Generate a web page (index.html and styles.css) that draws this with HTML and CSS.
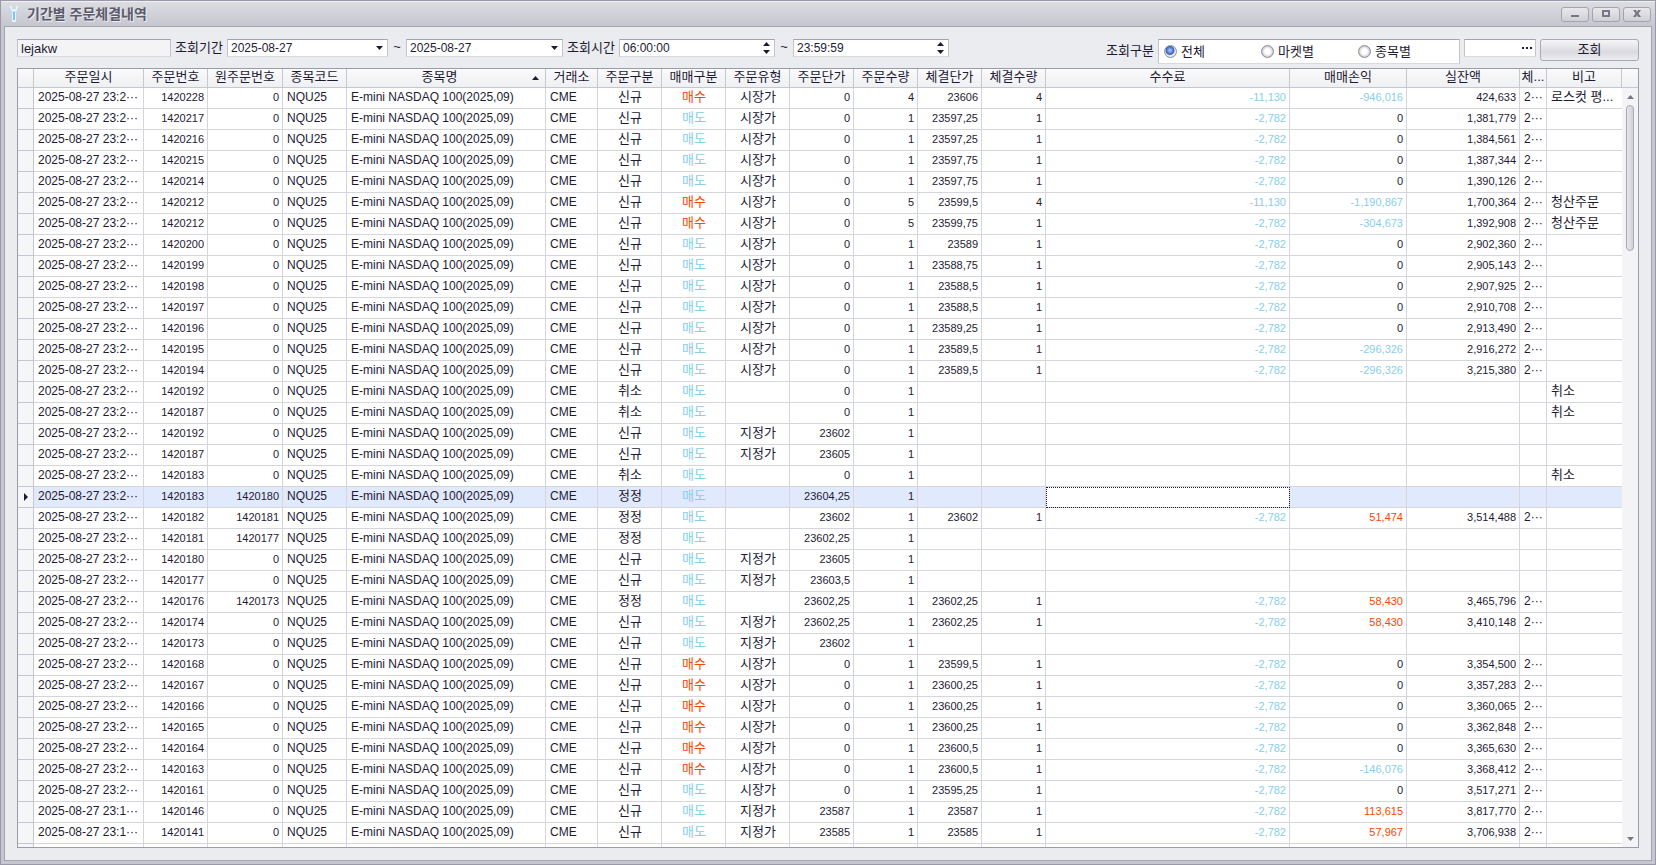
FILE: index.html
```
<!DOCTYPE html>
<html lang="ko">
<head>
<meta charset="utf-8">
<title>기간별 주문체결내역</title>
<link rel="stylesheet" href="styles.css">
</head>
<body>
<div class="window">
  <header class="titlebar">
    <svg class="appicon" width="10" height="16" viewBox="0 0 10 16">
      <path d="M1 0h2v3h4V0h2v4L7 6v10H3V6L1 4z" fill="#e4f4fd"/>
      <path d="M1 2v2l2 2h4l2-2V2" fill="none" stroke="#a9dcf6"/>
      <path d="M4 6h2v8H4z" fill="#7cc4f4"/>
    </svg>
    <h1>기간별 주문체결내역</h1>
    <div class="winbtns">
      <button type="button" aria-label="최소화"><svg width="10" height="8"><path d="M1 5h8v2H1z"/></svg></button>
      <button type="button" aria-label="최대화"><svg width="10" height="8"><path fill-rule="evenodd" d="M1 0h8v7H1zM3 2v3h4V2z"/></svg></button>
      <button type="button" aria-label="닫기"><svg width="10" height="8"><path d="M1 0h3l1 2 1-2h3L6.500 3.500 9 7H6L5 5 4 7H1l2.500-3.500z"/></svg></button>
    </div>
  </header>
  <main>
    <form class="toolbar">
      <input class="user" type="text" value="lejakw" aria-label="계좌" readonly>
      <label class="caption" for="date1">조회기간</label>
      <span class="box date1"><input id="date1" type="text" value="2025-08-27"><button type="button" class="drop" aria-label="달력"><svg width="7" height="4"><path d="M0 0h7L3.500 4z"/></svg></button></span>
      <span class="tilde">~</span>
      <span class="box date2"><input type="text" value="2025-08-27" aria-label="종료일"><button type="button" class="drop" aria-label="달력"><svg width="7" height="4"><path d="M0 0h7L3.500 4z"/></svg></button></span>
      <label class="caption" for="time1">조회시간</label>
      <span class="box time"><input id="time1" type="text" value="06:00:00"><button type="button" class="drop" aria-label="시간 변경"><svg width="7" height="12"><path d="M0 4h7L3.500 0zM0 8h7L3.500 12z"/></svg></button></span>
      <span class="tilde">~</span>
      <span class="box time"><input type="text" value="23:59:59" aria-label="종료시간"><button type="button" class="drop" aria-label="시간 변경"><svg width="7" height="12"><path d="M0 4h7L3.500 0zM0 8h7L3.500 12z"/></svg></button></span>
      <div class="filter">
        <span class="caption kind">조회구분</span>
        <div class="radios">
          <label><input type="radio" name="kind" checked>전체</label>
          <label><input type="radio" name="kind">마켓별</label>
          <label><input type="radio" name="kind">종목별</label>
        </div>
        <span class="box code"><input type="text" aria-label="종목"><button type="button" class="drop" aria-label="종목 찾기"><svg width="10" height="2"><path d="M0 0h2v2H0zM4 0h2v2H4zM8 0h2v2H8z"/></svg></button></span>
        <button type="submit" class="search">조회</button>
      </div>
    </form>
    <div class="grid">
      <div class="rows">
      <table>
        <colgroup>
          <col class="c16"><col class="c110"><col class="c64"><col class="c75"><col class="c64"><col class="c199"><col class="c52">
          <col class="c64"><col class="c64"><col class="c64"><col class="c64"><col class="c64"><col class="c64"><col class="c64">
          <col><col class="c117"><col class="c113"><col class="c27"><col class="c75">
        </colgroup>
        <thead>
          <tr><th></th><th>주문일시</th><th>주문번호</th><th>원주문번호</th><th>종목코드</th><th class="sorted">종목명<svg width="7" height="4"><path d="M0 4h7L3.500 0z"/></svg></th><th>거래소</th><th>주문구분</th><th>매매구분</th><th>주문유형</th><th>주문단가</th><th>주문수량</th><th>체결단가</th><th>체결수량</th><th>수수료</th><th>매매손익</th><th>실잔액</th><th>체...</th><th>비고</th></tr>
        </thead>
        <tbody>
          <tr><td></td><td>2025-08-27 23:2···</td><td>1420228</td><td>0</td><td>NQU25</td><td>E-mini NASDAQ 100(2025,09)</td><td>CME</td><td>신규</td><td class="up">매수</td><td>시장가</td><td>0</td><td>4</td><td>23606</td><td>4</td><td class="down">-11,130</td><td class="down">-946,016</td><td>424,633</td><td>2···</td><td>로스컷 평...</td></tr>
          <tr><td></td><td>2025-08-27 23:2···</td><td>1420217</td><td>0</td><td>NQU25</td><td>E-mini NASDAQ 100(2025,09)</td><td>CME</td><td>신규</td><td class="down">매도</td><td>시장가</td><td>0</td><td>1</td><td>23597,25</td><td>1</td><td class="down">-2,782</td><td>0</td><td>1,381,779</td><td>2···</td><td></td></tr>
          <tr><td></td><td>2025-08-27 23:2···</td><td>1420216</td><td>0</td><td>NQU25</td><td>E-mini NASDAQ 100(2025,09)</td><td>CME</td><td>신규</td><td class="down">매도</td><td>시장가</td><td>0</td><td>1</td><td>23597,25</td><td>1</td><td class="down">-2,782</td><td>0</td><td>1,384,561</td><td>2···</td><td></td></tr>
          <tr><td></td><td>2025-08-27 23:2···</td><td>1420215</td><td>0</td><td>NQU25</td><td>E-mini NASDAQ 100(2025,09)</td><td>CME</td><td>신규</td><td class="down">매도</td><td>시장가</td><td>0</td><td>1</td><td>23597,75</td><td>1</td><td class="down">-2,782</td><td>0</td><td>1,387,344</td><td>2···</td><td></td></tr>
          <tr><td></td><td>2025-08-27 23:2···</td><td>1420214</td><td>0</td><td>NQU25</td><td>E-mini NASDAQ 100(2025,09)</td><td>CME</td><td>신규</td><td class="down">매도</td><td>시장가</td><td>0</td><td>1</td><td>23597,75</td><td>1</td><td class="down">-2,782</td><td>0</td><td>1,390,126</td><td>2···</td><td></td></tr>
          <tr><td></td><td>2025-08-27 23:2···</td><td>1420212</td><td>0</td><td>NQU25</td><td>E-mini NASDAQ 100(2025,09)</td><td>CME</td><td>신규</td><td class="up">매수</td><td>시장가</td><td>0</td><td>5</td><td>23599,5</td><td>4</td><td class="down">-11,130</td><td class="down">-1,190,867</td><td>1,700,364</td><td>2···</td><td>청산주문</td></tr>
          <tr><td></td><td>2025-08-27 23:2···</td><td>1420212</td><td>0</td><td>NQU25</td><td>E-mini NASDAQ 100(2025,09)</td><td>CME</td><td>신규</td><td class="up">매수</td><td>시장가</td><td>0</td><td>5</td><td>23599,75</td><td>1</td><td class="down">-2,782</td><td class="down">-304,673</td><td>1,392,908</td><td>2···</td><td>청산주문</td></tr>
          <tr><td></td><td>2025-08-27 23:2···</td><td>1420200</td><td>0</td><td>NQU25</td><td>E-mini NASDAQ 100(2025,09)</td><td>CME</td><td>신규</td><td class="down">매도</td><td>시장가</td><td>0</td><td>1</td><td>23589</td><td>1</td><td class="down">-2,782</td><td>0</td><td>2,902,360</td><td>2···</td><td></td></tr>
          <tr><td></td><td>2025-08-27 23:2···</td><td>1420199</td><td>0</td><td>NQU25</td><td>E-mini NASDAQ 100(2025,09)</td><td>CME</td><td>신규</td><td class="down">매도</td><td>시장가</td><td>0</td><td>1</td><td>23588,75</td><td>1</td><td class="down">-2,782</td><td>0</td><td>2,905,143</td><td>2···</td><td></td></tr>
          <tr><td></td><td>2025-08-27 23:2···</td><td>1420198</td><td>0</td><td>NQU25</td><td>E-mini NASDAQ 100(2025,09)</td><td>CME</td><td>신규</td><td class="down">매도</td><td>시장가</td><td>0</td><td>1</td><td>23588,5</td><td>1</td><td class="down">-2,782</td><td>0</td><td>2,907,925</td><td>2···</td><td></td></tr>
          <tr><td></td><td>2025-08-27 23:2···</td><td>1420197</td><td>0</td><td>NQU25</td><td>E-mini NASDAQ 100(2025,09)</td><td>CME</td><td>신규</td><td class="down">매도</td><td>시장가</td><td>0</td><td>1</td><td>23588,5</td><td>1</td><td class="down">-2,782</td><td>0</td><td>2,910,708</td><td>2···</td><td></td></tr>
          <tr><td></td><td>2025-08-27 23:2···</td><td>1420196</td><td>0</td><td>NQU25</td><td>E-mini NASDAQ 100(2025,09)</td><td>CME</td><td>신규</td><td class="down">매도</td><td>시장가</td><td>0</td><td>1</td><td>23589,25</td><td>1</td><td class="down">-2,782</td><td>0</td><td>2,913,490</td><td>2···</td><td></td></tr>
          <tr><td></td><td>2025-08-27 23:2···</td><td>1420195</td><td>0</td><td>NQU25</td><td>E-mini NASDAQ 100(2025,09)</td><td>CME</td><td>신규</td><td class="down">매도</td><td>시장가</td><td>0</td><td>1</td><td>23589,5</td><td>1</td><td class="down">-2,782</td><td class="down">-296,326</td><td>2,916,272</td><td>2···</td><td></td></tr>
          <tr><td></td><td>2025-08-27 23:2···</td><td>1420194</td><td>0</td><td>NQU25</td><td>E-mini NASDAQ 100(2025,09)</td><td>CME</td><td>신규</td><td class="down">매도</td><td>시장가</td><td>0</td><td>1</td><td>23589,5</td><td>1</td><td class="down">-2,782</td><td class="down">-296,326</td><td>3,215,380</td><td>2···</td><td></td></tr>
          <tr><td></td><td>2025-08-27 23:2···</td><td>1420192</td><td>0</td><td>NQU25</td><td>E-mini NASDAQ 100(2025,09)</td><td>CME</td><td>취소</td><td class="down">매도</td><td></td><td>0</td><td>1</td><td></td><td></td><td></td><td></td><td></td><td></td><td>취소</td></tr>
          <tr><td></td><td>2025-08-27 23:2···</td><td>1420187</td><td>0</td><td>NQU25</td><td>E-mini NASDAQ 100(2025,09)</td><td>CME</td><td>취소</td><td class="down">매도</td><td></td><td>0</td><td>1</td><td></td><td></td><td></td><td></td><td></td><td></td><td>취소</td></tr>
          <tr><td></td><td>2025-08-27 23:2···</td><td>1420192</td><td>0</td><td>NQU25</td><td>E-mini NASDAQ 100(2025,09)</td><td>CME</td><td>신규</td><td class="down">매도</td><td>지정가</td><td>23602</td><td>1</td><td></td><td></td><td></td><td></td><td></td><td></td><td></td></tr>
          <tr><td></td><td>2025-08-27 23:2···</td><td>1420187</td><td>0</td><td>NQU25</td><td>E-mini NASDAQ 100(2025,09)</td><td>CME</td><td>신규</td><td class="down">매도</td><td>지정가</td><td>23605</td><td>1</td><td></td><td></td><td></td><td></td><td></td><td></td><td></td></tr>
          <tr><td></td><td>2025-08-27 23:2···</td><td>1420183</td><td>0</td><td>NQU25</td><td>E-mini NASDAQ 100(2025,09)</td><td>CME</td><td>취소</td><td class="down">매도</td><td></td><td>0</td><td>1</td><td></td><td></td><td></td><td></td><td></td><td></td><td>취소</td></tr>
          <tr class="selected"><td><svg width="4" height="8"><path d="M0 0l4 4-4 4z"/></svg></td><td>2025-08-27 23:2···</td><td>1420183</td><td>1420180</td><td>NQU25</td><td>E-mini NASDAQ 100(2025,09)</td><td>CME</td><td>정정</td><td class="down">매도</td><td></td><td>23604,25</td><td>1</td><td></td><td></td><td class="focused"></td><td></td><td></td><td></td><td></td></tr>
          <tr><td></td><td>2025-08-27 23:2···</td><td>1420182</td><td>1420181</td><td>NQU25</td><td>E-mini NASDAQ 100(2025,09)</td><td>CME</td><td>정정</td><td class="down">매도</td><td></td><td>23602</td><td>1</td><td>23602</td><td>1</td><td class="down">-2,782</td><td class="up">51,474</td><td>3,514,488</td><td>2···</td><td></td></tr>
          <tr><td></td><td>2025-08-27 23:2···</td><td>1420181</td><td>1420177</td><td>NQU25</td><td>E-mini NASDAQ 100(2025,09)</td><td>CME</td><td>정정</td><td class="down">매도</td><td></td><td>23602,25</td><td>1</td><td></td><td></td><td></td><td></td><td></td><td></td><td></td></tr>
          <tr><td></td><td>2025-08-27 23:2···</td><td>1420180</td><td>0</td><td>NQU25</td><td>E-mini NASDAQ 100(2025,09)</td><td>CME</td><td>신규</td><td class="down">매도</td><td>지정가</td><td>23605</td><td>1</td><td></td><td></td><td></td><td></td><td></td><td></td><td></td></tr>
          <tr><td></td><td>2025-08-27 23:2···</td><td>1420177</td><td>0</td><td>NQU25</td><td>E-mini NASDAQ 100(2025,09)</td><td>CME</td><td>신규</td><td class="down">매도</td><td>지정가</td><td>23603,5</td><td>1</td><td></td><td></td><td></td><td></td><td></td><td></td><td></td></tr>
          <tr><td></td><td>2025-08-27 23:2···</td><td>1420176</td><td>1420173</td><td>NQU25</td><td>E-mini NASDAQ 100(2025,09)</td><td>CME</td><td>정정</td><td class="down">매도</td><td></td><td>23602,25</td><td>1</td><td>23602,25</td><td>1</td><td class="down">-2,782</td><td class="up">58,430</td><td>3,465,796</td><td>2···</td><td></td></tr>
          <tr><td></td><td>2025-08-27 23:2···</td><td>1420174</td><td>0</td><td>NQU25</td><td>E-mini NASDAQ 100(2025,09)</td><td>CME</td><td>신규</td><td class="down">매도</td><td>지정가</td><td>23602,25</td><td>1</td><td>23602,25</td><td>1</td><td class="down">-2,782</td><td class="up">58,430</td><td>3,410,148</td><td>2···</td><td></td></tr>
          <tr><td></td><td>2025-08-27 23:2···</td><td>1420173</td><td>0</td><td>NQU25</td><td>E-mini NASDAQ 100(2025,09)</td><td>CME</td><td>신규</td><td class="down">매도</td><td>지정가</td><td>23602</td><td>1</td><td></td><td></td><td></td><td></td><td></td><td></td><td></td></tr>
          <tr><td></td><td>2025-08-27 23:2···</td><td>1420168</td><td>0</td><td>NQU25</td><td>E-mini NASDAQ 100(2025,09)</td><td>CME</td><td>신규</td><td class="up">매수</td><td>시장가</td><td>0</td><td>1</td><td>23599,5</td><td>1</td><td class="down">-2,782</td><td>0</td><td>3,354,500</td><td>2···</td><td></td></tr>
          <tr><td></td><td>2025-08-27 23:2···</td><td>1420167</td><td>0</td><td>NQU25</td><td>E-mini NASDAQ 100(2025,09)</td><td>CME</td><td>신규</td><td class="up">매수</td><td>시장가</td><td>0</td><td>1</td><td>23600,25</td><td>1</td><td class="down">-2,782</td><td>0</td><td>3,357,283</td><td>2···</td><td></td></tr>
          <tr><td></td><td>2025-08-27 23:2···</td><td>1420166</td><td>0</td><td>NQU25</td><td>E-mini NASDAQ 100(2025,09)</td><td>CME</td><td>신규</td><td class="up">매수</td><td>시장가</td><td>0</td><td>1</td><td>23600,25</td><td>1</td><td class="down">-2,782</td><td>0</td><td>3,360,065</td><td>2···</td><td></td></tr>
          <tr><td></td><td>2025-08-27 23:2···</td><td>1420165</td><td>0</td><td>NQU25</td><td>E-mini NASDAQ 100(2025,09)</td><td>CME</td><td>신규</td><td class="up">매수</td><td>시장가</td><td>0</td><td>1</td><td>23600,25</td><td>1</td><td class="down">-2,782</td><td>0</td><td>3,362,848</td><td>2···</td><td></td></tr>
          <tr><td></td><td>2025-08-27 23:2···</td><td>1420164</td><td>0</td><td>NQU25</td><td>E-mini NASDAQ 100(2025,09)</td><td>CME</td><td>신규</td><td class="up">매수</td><td>시장가</td><td>0</td><td>1</td><td>23600,5</td><td>1</td><td class="down">-2,782</td><td>0</td><td>3,365,630</td><td>2···</td><td></td></tr>
          <tr><td></td><td>2025-08-27 23:2···</td><td>1420163</td><td>0</td><td>NQU25</td><td>E-mini NASDAQ 100(2025,09)</td><td>CME</td><td>신규</td><td class="up">매수</td><td>시장가</td><td>0</td><td>1</td><td>23600,5</td><td>1</td><td class="down">-2,782</td><td class="down">-146,076</td><td>3,368,412</td><td>2···</td><td></td></tr>
          <tr><td></td><td>2025-08-27 23:2···</td><td>1420161</td><td>0</td><td>NQU25</td><td>E-mini NASDAQ 100(2025,09)</td><td>CME</td><td>신규</td><td class="down">매도</td><td>시장가</td><td>0</td><td>1</td><td>23595,25</td><td>1</td><td class="down">-2,782</td><td>0</td><td>3,517,271</td><td>2···</td><td></td></tr>
          <tr><td></td><td>2025-08-27 23:1···</td><td>1420146</td><td>0</td><td>NQU25</td><td>E-mini NASDAQ 100(2025,09)</td><td>CME</td><td>신규</td><td class="down">매도</td><td>지정가</td><td>23587</td><td>1</td><td>23587</td><td>1</td><td class="down">-2,782</td><td class="up">113,615</td><td>3,817,770</td><td>2···</td><td></td></tr>
          <tr><td></td><td>2025-08-27 23:1···</td><td>1420141</td><td>0</td><td>NQU25</td><td>E-mini NASDAQ 100(2025,09)</td><td>CME</td><td>신규</td><td class="down">매도</td><td>지정가</td><td>23585</td><td>1</td><td>23585</td><td>1</td><td class="down">-2,782</td><td class="up">57,967</td><td>3,706,938</td><td>2···</td><td></td></tr>
          <tr><td></td><td></td><td></td><td></td><td></td><td></td><td></td><td></td><td></td><td></td><td></td><td></td><td></td><td></td><td></td><td></td><td></td><td></td><td></td></tr>
        </tbody>
      </table>
      </div>
      <div class="scroll">
        <svg width="7" height="4"><path d="M0 4h7L3.500 0z"/></svg>
        <div class="track"><div class="thumb"></div></div>
        <svg width="7" height="4"><path d="M0 0h7L3.500 4z"/></svg>
      </div>
    </div>
  </main>
</div>
</body>
</html>
```
FILE: styles.css
```
* { box-sizing: border-box; }
body {
  margin: 0;
  font: 13px/16px "Liberation Sans", "Noto Sans CJK KR", sans-serif;
  color: #1e1a33;
}
input, button { font: inherit; color: inherit; margin: 0; padding: 0; }
svg { display: block; fill: #1e1a33; }

.window {
  height: 100vh;
  display: flex;
  flex-direction: column;
  padding: 0 3px 3px;
  background: #c6c6d0;
  border: 1px solid #9999a9;
}

/* title bar */
.titlebar {
  height: 25px;
  flex: none;
  display: flex;
  align-items: center;
  margin: 0 -3px;
  padding: 0 4px 0 8px;
  border-top: 1px solid #f0f0f4;
  background: linear-gradient(#dcdce2, #c6c6d0);
}
.titlebar h1 {
  margin: 0 auto 0 8px;
  font-size: 14px;
  line-height: 20px;
  color: #5b5b6b;
  text-shadow: 1px 1px 0 #ededf2;
}
.winbtns { display: flex; gap: 3px; }
.winbtns button {
  width: 28px;
  height: 15px;
  display: flex;
  align-items: center;
  justify-content: center;
  border: 1px solid #a3a3af;
  border-radius: 3px;
  background: linear-gradient(#e8e8ec, #cfcfd6);
}
.winbtns svg { fill: #777785; }

main {
  flex: 1;
  min-height: 0;
  display: flex;
  flex-direction: column;
  padding: 12px;
  background: #ebecf0;
  border: 1px solid #a5a5b0;
}

/* search conditions */
.toolbar { height: 29px; flex: none; display: flex; align-items: flex-start; gap: 4px; }
.caption { width: 48px; line-height: 18px; white-space: nowrap; }
.kind { line-height: 24px; }
.tilde { width: 10px; text-align: center; }
.user, .box {
  height: 18px;
  background: #fff;
  border: 1px solid #c3c3cd;
  border-top-color: #a3a3af;
  border-bottom-color: #d9d9df;
}
.user { width: 154px; padding: 0 3px; background: #f4f4f7; }
.box { display: flex; }
.box input { flex: 1; min-width: 0; padding: 0 3px; border: 0; background: none; font-size: 12px; }
.date1 { width: 161px; }
.date2 { width: 157px; }
.time { width: 156px; }
.code { width: 72px; }
.drop {
  width: 16px;
  display: flex;
  align-items: center;
  justify-content: center;
  border: 0;
  background: none;
}
.filter { display: flex; align-items: flex-start; gap: 4px; margin-left: auto; }
.radios {
  display: flex;
  width: 302px;
  height: 25px;
  padding-left: 5px;
  background: #fff;
  border: 1px solid #c3c3cd;
  border-top-color: #a3a3af;
  border-bottom-color: #d9d9df;
}
.radios label { width: 97px; display: flex; align-items: center; gap: 4px; }
.radios input {
  appearance: none;
  width: 13px;
  height: 13px;
  border: 1px solid #8f8f9b;
  border-radius: 50%;
  background: radial-gradient(#fff 35%, #c9c9d2 70%);
}
.radios input:checked { background: radial-gradient(circle at 45% 40%, #b4ccf8, #3560c0 45%, #e6e6ec 55%); }
.search {
  width: 99px;
  height: 22px;
  border: 1px solid #a9a9b5;
  border-radius: 3px;
  background: linear-gradient(#f6f6f8, #dadae0 60%, #ececf0);
}

/* order grid */
.grid { flex: 1; min-height: 0; display: flex; border: 1px solid #9b9baa; background: #fff; }
.rows { flex: 1; min-width: 0; overflow: hidden; }
table { width: 100%; table-layout: fixed; border-collapse: separate; border-spacing: 0; }
.c16 { width: 16px; }
.c27 { width: 27px; }
.c52 { width: 52px; }
.c64 { width: 64px; }
.c75 { width: 75px; }
.c110 { width: 110px; }
.c113 { width: 113px; }
.c117 { width: 117px; }
.c199 { width: 199px; }
th {
  position: relative;
  height: 19px;
  padding: 0 0 2px;
  font-weight: normal;
  white-space: nowrap;
  border-right: 1px solid #c6c6d0;
  border-bottom: 1px solid #c6c6d0;
  background: linear-gradient(#fafafb, #eff0f3);
}
.sorted { padding-right: 13px; }
.sorted svg { position: absolute; right: 6px; top: 7px; }
td {
  height: 21px;
  padding: 0 3px 2px 4px;
  white-space: nowrap;
  overflow: hidden;
  font-size: 12px;
  border-right: 1px solid #d5d5db;
  border-bottom: 1px solid #d5d5db;
}
td:first-child { padding: 0 0 0 6px; background: #f5f6f8; border-color: #c6c6d0; }
td:last-child { font-size: 13px; border-right: 0; }
td:nth-child(8), td:nth-child(9), td:nth-child(10) { font-size: 13px; text-align: center; }
td:nth-child(3), td:nth-child(4),
td:nth-child(n+11):nth-child(-n+17) { font-size: 11px; text-align: right; }
.up { color: #ff4500; }
.down { color: #87ceeb; }
.selected td:nth-child(n+2) { background: #e1e9fc; }
.selected td.focused { background: #fff; outline: 1px dotted #1e1a33; outline-offset: -1px; }

.scroll {
  width: 16px;
  display: flex;
  flex-direction: column;
  align-items: center;
  padding: 26px 0 6px;
  background: linear-gradient(#fafafb, #eff0f3 18px, #c6c6d0 18px, #c6c6d0 19px, #f4f4f7 19px);
}
.scroll svg { flex: none; fill: #777785; }
.track { flex: 1; padding-top: 6px; }
.thumb {
  width: 8px;
  height: 20%;
  border: 1px solid #a9a9b5;
  border-radius: 4px;
  background: linear-gradient(90deg, #e8e8ec, #cfcfd6);
}
```
